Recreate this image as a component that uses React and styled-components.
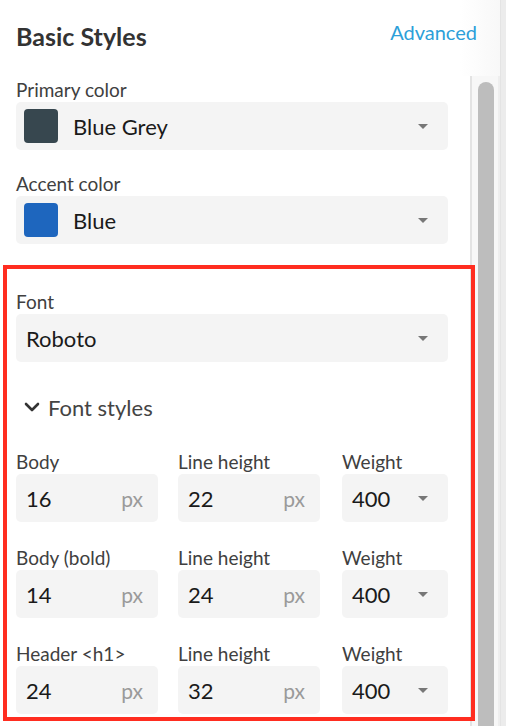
import React from "react";
import styled, { createGlobalStyle } from "styled-components";

const GlobalStyle = createGlobalStyle`
  html, body {
    margin: 0;
    padding: 0;
    background: #ffffff;
    overflow: hidden;
  }
  body {
    font-family: Lato, "Open Sans", "Liberation Sans", sans-serif;
    -webkit-font-smoothing: antialiased;
  }
`;

const typeRows = [
  { label: "Body", size: 16, line: 22, weight: 400 },
  { label: "Body (bold)", size: 14, line: 24, weight: 400 },
  { label: "Header <h1>", size: 24, line: 32, weight: 400 },
];

const Caret = () => <StyledCaret />;

const ColorSelect = ({ label, name, swatch }) => (
  <Field>
    <Label>{label}</Label>
    <SelectBox>
      <Swatch $color={swatch} />
      <SelectText>{name}</SelectText>
      <Caret />
    </SelectBox>
  </Field>
);

const PxInput = ({ value }) => (
  <InputBox>
    <SelectText>{value}</SelectText>
    <Unit>px</Unit>
  </InputBox>
);

const App = () => {
  return (
    <>
      <GlobalStyle />
      <StyledPage>
        <StyledFrame>
          <StyledHeader>
            <StyledTitle>Basic Styles</StyledTitle>
            <StyledLink>Advanced</StyledLink>
          </StyledHeader>
          <StyledBody>
            <StyledContent>
              <ColorSelect label="Primary color" name="Blue Grey" swatch="#37474f" />
              <ColorSelect label="Accent color" name="Blue" swatch="#1e66be" />

              <Highlight>
                <Field>
                  <Label>Font</Label>
                  <SelectBox>
                    <SelectText>Roboto</SelectText>
                    <Caret />
                  </SelectBox>
                </Field>

                <Toggle>
                  <svg width="16" height="10" viewBox="0 0 16 10">
                    <path
                      d="M2 2 L8 8 L14 2"
                      fill="none"
                      stroke="#333"
                      strokeWidth="2.6"
                      strokeLinecap="round"
                      strokeLinejoin="round"
                    />
                  </svg>
                  <span>Font styles</span>
                </Toggle>

                <TypeGrid>
                  {typeRows.map((row) => (
                    <React.Fragment key={row.label}>
                      <Field>
                        <Label>{row.label}</Label>
                        <PxInput value={row.size} />
                      </Field>
                      <Field>
                        <Label>Line height</Label>
                        <PxInput value={row.line} />
                      </Field>
                      <Field>
                        <Label>Weight</Label>
                        <SelectBox>
                          <SelectText>{row.weight}</SelectText>
                          <Caret />
                        </SelectBox>
                      </Field>
                    </React.Fragment>
                  ))}
                </TypeGrid>
              </Highlight>
            </StyledContent>
            <StyledTrack>
              <StyledThumb />
            </StyledTrack>
          </StyledBody>
        </StyledFrame>
        <StyledEdge />
      </StyledPage>
    </>
  );
};

const StyledPage = styled.div`
  display: flex;
  width: 506px;
  height: 726px;
  overflow: hidden;
`;

const StyledFrame = styled.div`
  width: 500px;
  display: flex;
  flex-direction: column;
`;

const StyledEdge = styled.div`
  width: 6px;
  background: #ececec;
  border-left: 1px solid #e4e4e4;
  box-sizing: border-box;
`;

const StyledHeader = styled.header`
  height: 76px;
  box-sizing: border-box;
  padding: 20px 23px 0 16px;
  display: flex;
  justify-content: space-between;
  align-items: flex-start;
  background: linear-gradient(to right, #ffffff 92%, #f8f8f8);
`;

const StyledTitle = styled.h1`
  margin: 0;
  font-size: 25px;
  line-height: 32px;
  font-weight: 700;
  color: #333333;
`;

const StyledLink = styled.a`
  margin-top: -1px;
  font-size: 20px;
  line-height: 26px;
  color: #2d9fd9;
  cursor: pointer;
`;

const StyledBody = styled.div`
  flex: 1;
  display: flex;
  min-height: 0;
`;

const StyledContent = styled.div`
  width: 470px;
  box-sizing: border-box;
  padding: 2px 22px 0 16px;
  display: flex;
  flex-direction: column;
  gap: 22px;
`;

const StyledTrack = styled.div`
  width: 30px;
  box-sizing: border-box;
  border-left: 2px solid #e3e3e3;
  border-right: 2px solid #eeeeee;
  background: #f7f7f7;
  padding: 6px 0 0 6px;
  overflow: hidden;
`;

const StyledThumb = styled.div`
  width: 16px;
  height: 900px;
  border-radius: 8px;
  background: #bdbdbd;
`;

const Field = styled.div`
  display: flex;
  flex-direction: column;
`;

const Label = styled.label`
  font-size: 19px;
  line-height: 24px;
  color: #404040;
`;

const SelectBox = styled.div`
  height: 48px;
  box-sizing: border-box;
  display: flex;
  align-items: center;
  padding: 0 20px 0 10px;
  background: #f4f4f4;
  border-radius: 5px;
  cursor: pointer;
`;

const Swatch = styled.span`
  width: 34px;
  height: 34px;
  margin-left: -2px;
  margin-right: 15px;
  border-radius: 4px;
  background: ${({ $color }) => $color};
`;

const SelectText = styled.span`
  flex: 1;
  font-size: 22px;
  color: #1a1a1a;
`;

const StyledCaret = styled.span`
  width: 0;
  height: 0;
  border-left: 5px solid transparent;
  border-right: 5px solid transparent;
  border-top: 5px solid #777777;
`;

const InputBox = styled(SelectBox)`
  padding-right: 15px;
  cursor: text;
`;

const Unit = styled.span`
  font-size: 21px;
  color: #9a9a9a;
`;

const Highlight = styled.section`
  position: relative;
  z-index: 1;
  margin: -1px -27px 0 -13px;
  padding: 21px 23px 3px 9px;
  border: 4px solid #ff2d20;
  display: flex;
  flex-direction: column;
`;

const Toggle = styled.div`
  height: 40px;
  margin: 25px 0 23px;
  padding-left: 8px;
  display: flex;
  align-items: center;
  gap: 8px;
  font-size: 22px;
  color: #444444;
  cursor: pointer;
`;

const TypeGrid = styled.div`
  display: grid;
  grid-template-columns: 142px 142px 1fr;
  column-gap: 20px;
  row-gap: 24px;

  & > *:nth-child(3n) {
    margin-left: 2px;
  }
`;

export default App;
